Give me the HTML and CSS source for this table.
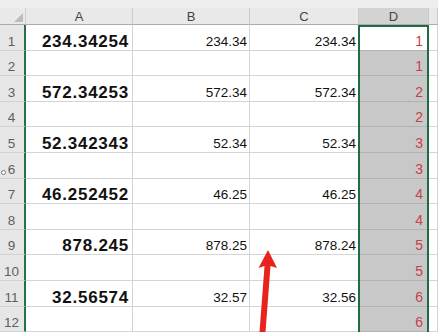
FILE: index.html
```html
<!DOCTYPE html>
<html>
<head>
<meta charset="utf-8">
<link rel="stylesheet" href="styles.css">
</head>
<body>
<div class="sheet">
  <div class="topstrip"></div>
  <div class="grid">
    <div class="corner"><span class="tri"></span></div>
    <div class="ch">A</div><div class="ch">B</div><div class="ch">C</div><div class="ch ch-sel">D</div><div class="ch"></div>

    <div class="rh">1</div><div class="c a">234.34254</div><div class="c b">234.34</div><div class="c b">234.34</div><div class="c d d-active">1</div><div class="c"></div>
    <div class="rh">2</div><div class="c a"></div><div class="c b"></div><div class="c b"></div><div class="c d">1</div><div class="c"></div>
    <div class="rh">3</div><div class="c a">572.34253</div><div class="c b">572.34</div><div class="c b">572.34</div><div class="c d">2</div><div class="c"></div>
    <div class="rh">4</div><div class="c a"></div><div class="c b"></div><div class="c b"></div><div class="c d">2</div><div class="c"></div>
    <div class="rh">5</div><div class="c a">52.342343</div><div class="c b">52.34</div><div class="c b">52.34</div><div class="c d">3</div><div class="c"></div>
    <div class="rh">6</div><div class="c a"></div><div class="c b"></div><div class="c b"></div><div class="c d">3</div><div class="c"></div>
    <div class="rh">7</div><div class="c a">46.252452</div><div class="c b">46.25</div><div class="c b">46.25</div><div class="c d">4</div><div class="c"></div>
    <div class="rh">8</div><div class="c a"></div><div class="c b"></div><div class="c b"></div><div class="c d">4</div><div class="c"></div>
    <div class="rh">9</div><div class="c a">878.245</div><div class="c b">878.25</div><div class="c b">878.24</div><div class="c d">5</div><div class="c"></div>
    <div class="rh">10</div><div class="c a"></div><div class="c b"></div><div class="c b"></div><div class="c d">5</div><div class="c"></div>
    <div class="rh">11</div><div class="c a">32.56574</div><div class="c b">32.57</div><div class="c b">32.56</div><div class="c d">6</div><div class="c"></div>
    <div class="rh">12</div><div class="c a"></div><div class="c b"></div><div class="c b"></div><div class="c d">6</div><div class="c"></div>
  </div>
  <div class="selection"></div>
  <span class="cursor-dot"></span>
  <svg class="arrow" width="438" height="332" viewBox="0 0 438 332">
    <path d="M268 250 L277 268 L270.5 266 L265.5 332 L259.5 332 L264.5 266 L258.5 268 Z" fill="#e8231d"/>
  </svg>
</div>
</body>
</html>
```

FILE: styles.css
```css
html, body {
  margin: 0;
  padding: 0;
  background: #ffffff;
  overflow: hidden;
}
.sheet {
  position: relative;
  width: 438px;
  height: 332px;
  overflow: hidden;
  font-family: "Liberation Sans", Arial, sans-serif;
}
.topstrip {
  height: 8px;
  background: #eeeeee;
}
.grid {
  display: grid;
  grid-template-columns: 26px 107px 117px 109px 70px 9px;
  grid-template-rows: 17px repeat(12, 25.6px);
}
.corner {
  position: relative;
  background: #e9e9e9;
  border-right: 1px solid #cfcfcf;
  border-bottom: 1px solid #ababab;
}
.tri {
  position: absolute;
  right: 2px;
  bottom: 2px;
  width: 0;
  height: 0;
  border-left: 9px solid transparent;
  border-bottom: 9px solid #bcbcbc;
}
.ch {
  background: #e9e9e9;
  border-right: 1px solid #cbcbcb;
  border-bottom: 1px solid #ababab;
  color: #444444;
  font-size: 13px;
  display: flex;
  align-items: flex-end;
  justify-content: center;
  line-height: 13px;
  padding-bottom: 1px;
  box-sizing: border-box;
}
.ch-sel {
  background: #d3d3d3;
}
.rh {
  background: #e6e6e6;
  border-right: 2px solid #217346;
  border-bottom: 1px solid #d2d2d2;
  color: #5f5f5f;
  font-size: 13.5px;
  display: flex;
  align-items: flex-end;
  justify-content: center;
  line-height: 13px;
  padding-bottom: 2px;
  padding-right: 1px;
  box-sizing: border-box;
}
.c {
  border-right: 1px solid #d4d4d4;
  border-bottom: 1px solid #d4d4d4;
  display: flex;
  align-items: flex-end;
  justify-content: flex-end;
  box-sizing: border-box;
  color: #111111;
  white-space: nowrap;
}
.a {
  font-size: 17px;
  font-weight: bold;
  letter-spacing: 0.75px;
  line-height: 17px;
  padding-right: 3px;
  padding-bottom: 0px;
}
.b {
  font-size: 13.5px;
  line-height: 13px;
  padding-right: 2px;
  padding-bottom: 2px;
}
.d {
  background: #c8c8c8;
  border-bottom-color: #b3b3b3;
  color: #c5414d;
  font-size: 14px;
  line-height: 14px;
  padding-right: 5px;
  padding-bottom: 2px;
}
.d-active {
  background: #ffffff;
}
.selection {
  position: absolute;
  left: 358px;
  top: 25px;
  width: 71px;
  height: 320px;
  border: 2px solid #1f6b42;
  box-sizing: border-box;
  pointer-events: none;
}
.cursor-dot {
  position: absolute;
  left: 1px;
  top: 170px;
  width: 3px;
  height: 3px;
  border: 1px solid #7a7a7a;
  border-radius: 50%;
  background: #ffffff;
}
.arrow {
  position: absolute;
  left: 0;
  top: 0;
  pointer-events: none;
}
```
